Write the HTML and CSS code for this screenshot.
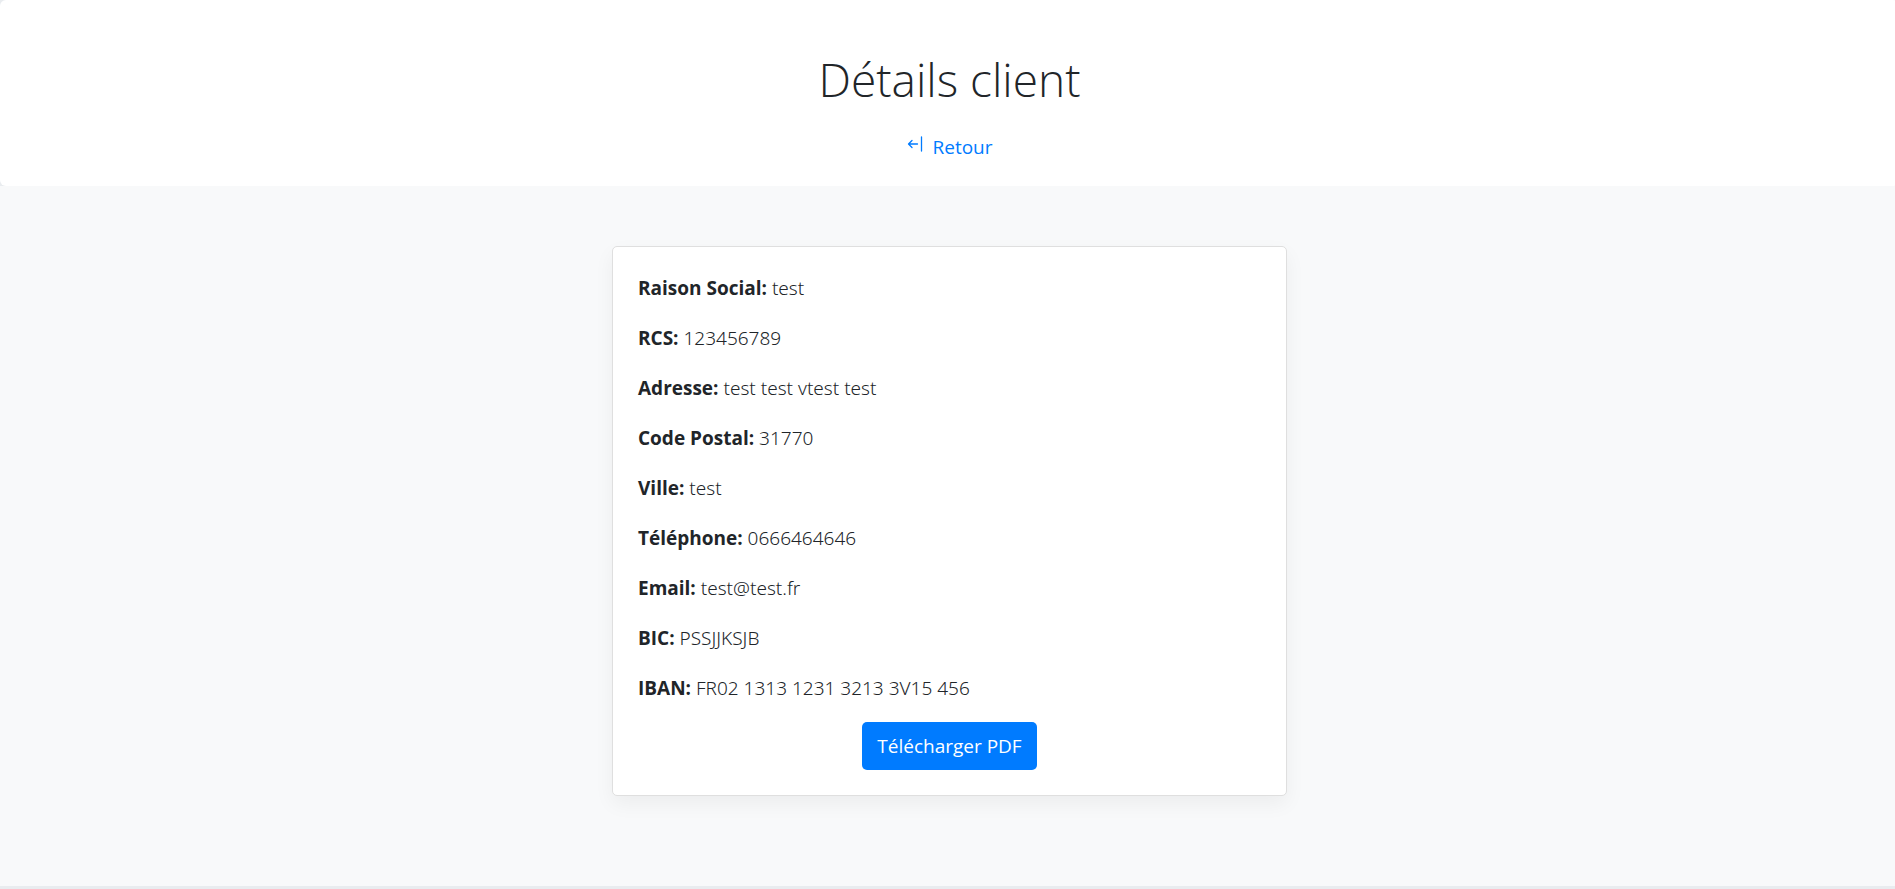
FILE: index.html
```html
<!DOCTYPE html>
<html lang="fr">
<head>
<meta charset="utf-8">
<meta name="viewport" content="width=device-width, initial-scale=1">
<title>Détails client</title>
<link rel="stylesheet" href="styles.css">
</head>
<body>
<div class="page">
<header class="hero">
  <h1 class="hero-title">Détails client</h1>
  <a class="back-link" href="#">
    <svg class="back-icon" viewBox="0 0 20 20" fill="none" stroke="currentColor" stroke-linecap="round" stroke-linejoin="round" aria-hidden="true">
      <path d="M6 8.500 2.500 12 6 15.500M3 12h8.500" stroke-width="1.300"/>
      <path d="M15.500 5v14" stroke-width="1.300"/>
    </svg>
    <span>Retour</span>
  </a>
</header>
<main class="content">
  <section class="card">
    <p class="field"><strong>Raison Social:</strong> test</p>
    <p class="field"><strong>RCS:</strong> 123456789</p>
    <p class="field"><strong>Adresse:</strong> test test vtest test</p>
    <p class="field"><strong>Code Postal:</strong> 31770</p>
    <p class="field"><strong>Ville:</strong> test</p>
    <p class="field"><strong>Téléphone:</strong> 0666464646</p>
    <p class="field"><strong>Email:</strong> test@test.fr</p>
    <p class="field"><strong>BIC:</strong> PSSJJKSJB</p>
    <p class="field"><strong>IBAN:</strong> FR02 1313 1231 3213 3V15 456</p>
    <button class="download" type="button">Télécharger PDF</button>
  </section>
</main>
</div>
</body>
</html>
```
FILE: styles.css
```css
* {
  box-sizing: border-box;
}

body {
  margin: 0;
  overflow-x: hidden;
  background: #e9ecef;
  color: #212529;
  font-family: "Open Sans", "Noto Sans", sans-serif;
  font-size: 19px;
  line-height: 30px;
}

.page {
  margin-right: -4px;
}

.hero {
  display: flex;
  flex-direction: column;
  align-items: center;
  gap: 22px;
  padding: 48px 20px 24px;
  border-radius: 6px;
  background: #fff;
}

.hero-title {
  margin: 0;
  font-size: 46px;
  font-weight: 300;
  line-height: 62px;
}

.back-link {
  display: flex;
  gap: 6px;
  color: #007bff;
  text-decoration: none;
}

.back-icon {
  width: 20px;
  height: 20px;
}

.content {
  padding: 60px 20px 90px;
  background: #f8f9fa;
}

.card {
  display: flex;
  flex-direction: column;
  max-width: 675px;
  margin: 0 auto;
  padding: 26px 25px 25px;
  border: 1px solid #dfdfdf;
  border-radius: 5px;
  background: #fff;
  box-shadow: 0 8px 20px rgba(0, 0, 0, 0.05);
}

.field {
  margin: 0 0 20px;
  font-family: "Noto Sans", "Open Sans", sans-serif;
  font-weight: 300;
}

.field strong {
  font-family: "Open Sans", "Noto Sans", sans-serif;
  font-weight: 700;
}

.field:last-of-type {
  margin-bottom: 19px;
}

.download {
  align-self: center;
  padding: 9px 15px;
  border: 0;
  border-radius: 5px;
  background: #007bff;
  color: #fff;
  font: inherit;
  cursor: pointer;
}
```
